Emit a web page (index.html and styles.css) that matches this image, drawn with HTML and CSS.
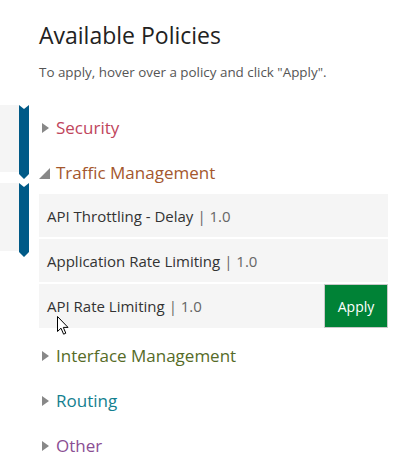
FILE: index.html
```html
<!DOCTYPE html>
<html>
<head>
<meta charset="utf-8">
<link rel="stylesheet" href="styles.css">
</head>
<body>
<div class="page">
  <div class="rail">
    <div class="marker m1">
      <div class="panel"></div>
      <svg class="bar" width="10" height="74" viewBox="0 0 10 74"><polygon points="0,0 5,4 10,0 10,69 5,74 0,69" fill="#005a87"/></svg>
    </div>
    <div class="marker m2">
      <div class="panel"></div>
      <svg class="bar" width="10" height="74" viewBox="0 0 10 74"><polygon points="0,0 5,4 10,0 10,69 5,74 0,69" fill="#005a87"/></svg>
    </div>
  </div>
  <div class="main">
    <h1 class="title">Available Policies</h1>
    <p class="hint">To apply, hover over a policy and click "Apply".</p>
    <div class="cat security"><span class="tri-right"></span><span>Security</span></div>
    <div class="cat traffic"><span class="tri-open"></span><span>Traffic Management</span></div>
    <div class="items">
      <div class="item"><span class="name">API Throttling - Delay</span><span class="ver">| 1.0</span></div>
      <div class="item"><span class="name">Application Rate Limiting</span><span class="ver">| 1.0</span></div>
      <div class="item hover"><span class="name">API Rate Limiting</span><span class="ver">| 1.0</span><button class="apply">Apply</button>
        <svg class="cursor" width="13" height="19" viewBox="0 0 13 19"><path d="M0.5,0.5 L0.5,15.5 L4,12.2 L6.6,18.2 L8.8,17.2 L6.3,11.4 L11,11.4 Z" fill="#fff" stroke="#000" stroke-width="1" stroke-linejoin="miter"/></svg>
      </div>
    </div>
    <div class="cat iface"><span class="tri-right"></span><span>Interface Management</span></div>
    <div class="cat routing"><span class="tri-right"></span><span>Routing</span></div>
    <div class="cat other"><span class="tri-right"></span><span>Other</span></div>
  </div>
</div>
</body>
</html>
```
FILE: styles.css
```css
html, body {
  margin: 0;
  padding: 0;
  background: #fff;
}
body {
  font-family: "Open Sans", "Noto Sans", sans-serif;
  color: #222;
  overflow: hidden;
}
.page {
  display: flex;
  width: 405px;
  height: 462px;
}
.rail {
  width: 29px;
  padding-top: 105px;
  display: flex;
  flex-direction: column;
  gap: 4px;
}
.marker {
  display: flex;
  align-items: flex-start;
}
.panel {
  width: 19px;
  height: 67px;
  background: #f5f5f5;
}
.m2 .panel {
  height: 68px;
}
.bar {
  display: block;
}
.main {
  margin-left: 10px;
  width: 350px;
}
.title {
  margin: 19px 0 0 0;
  font-weight: 400;
  font-size: 23px;
  line-height: 32px;
  color: #222;
}
.hint {
  margin: 12px 0 0 0;
  font-size: 13.4px;
  line-height: 18px;
  color: #555;
}
.cat {
  display: flex;
  align-items: center;
  height: 45px;
  font-size: 17px;
}
.security { margin-top: 24px; color: #c0455c; }
.traffic { color: #a4572d; height: 44px; }
.iface { margin-top: 5px; color: #566b27; }
.routing { color: #137f8f; }
.other { color: #8a4e93; }
.tri-right {
  width: 0;
  height: 0;
  border-top: 5px solid transparent;
  border-bottom: 5px solid transparent;
  border-left: 7px solid #888;
  margin: 1px 7px 0 3px;
}
.tri-open {
  width: 0;
  height: 0;
  border-left: 11px solid transparent;
  border-bottom: 11px solid #888;
  margin: 3px 6px 0 0;
}
.items {
  display: flex;
  flex-direction: column;
  gap: 2px;
  width: 349px;
}
.item {
  position: relative;
  display: flex;
  align-items: center;
  height: 43px;
  background: #f5f5f5;
  padding-left: 8px;
  font-size: 15px;
  color: #333;
}
.item.hover {
  height: 44px;
}
.ver {
  color: #666;
  margin-left: 4px;
}
.apply {
  margin-left: auto;
  align-self: stretch;
  width: 64px;
  background: #008236;
  border: 1px solid #c9c9c9;
  color: #fff;
  font-family: "Open Sans", "Noto Sans", sans-serif;
  font-size: 14px;
  padding: 0;
}
.cursor {
  position: absolute;
  left: 18px;
  top: 32px;
}
```
